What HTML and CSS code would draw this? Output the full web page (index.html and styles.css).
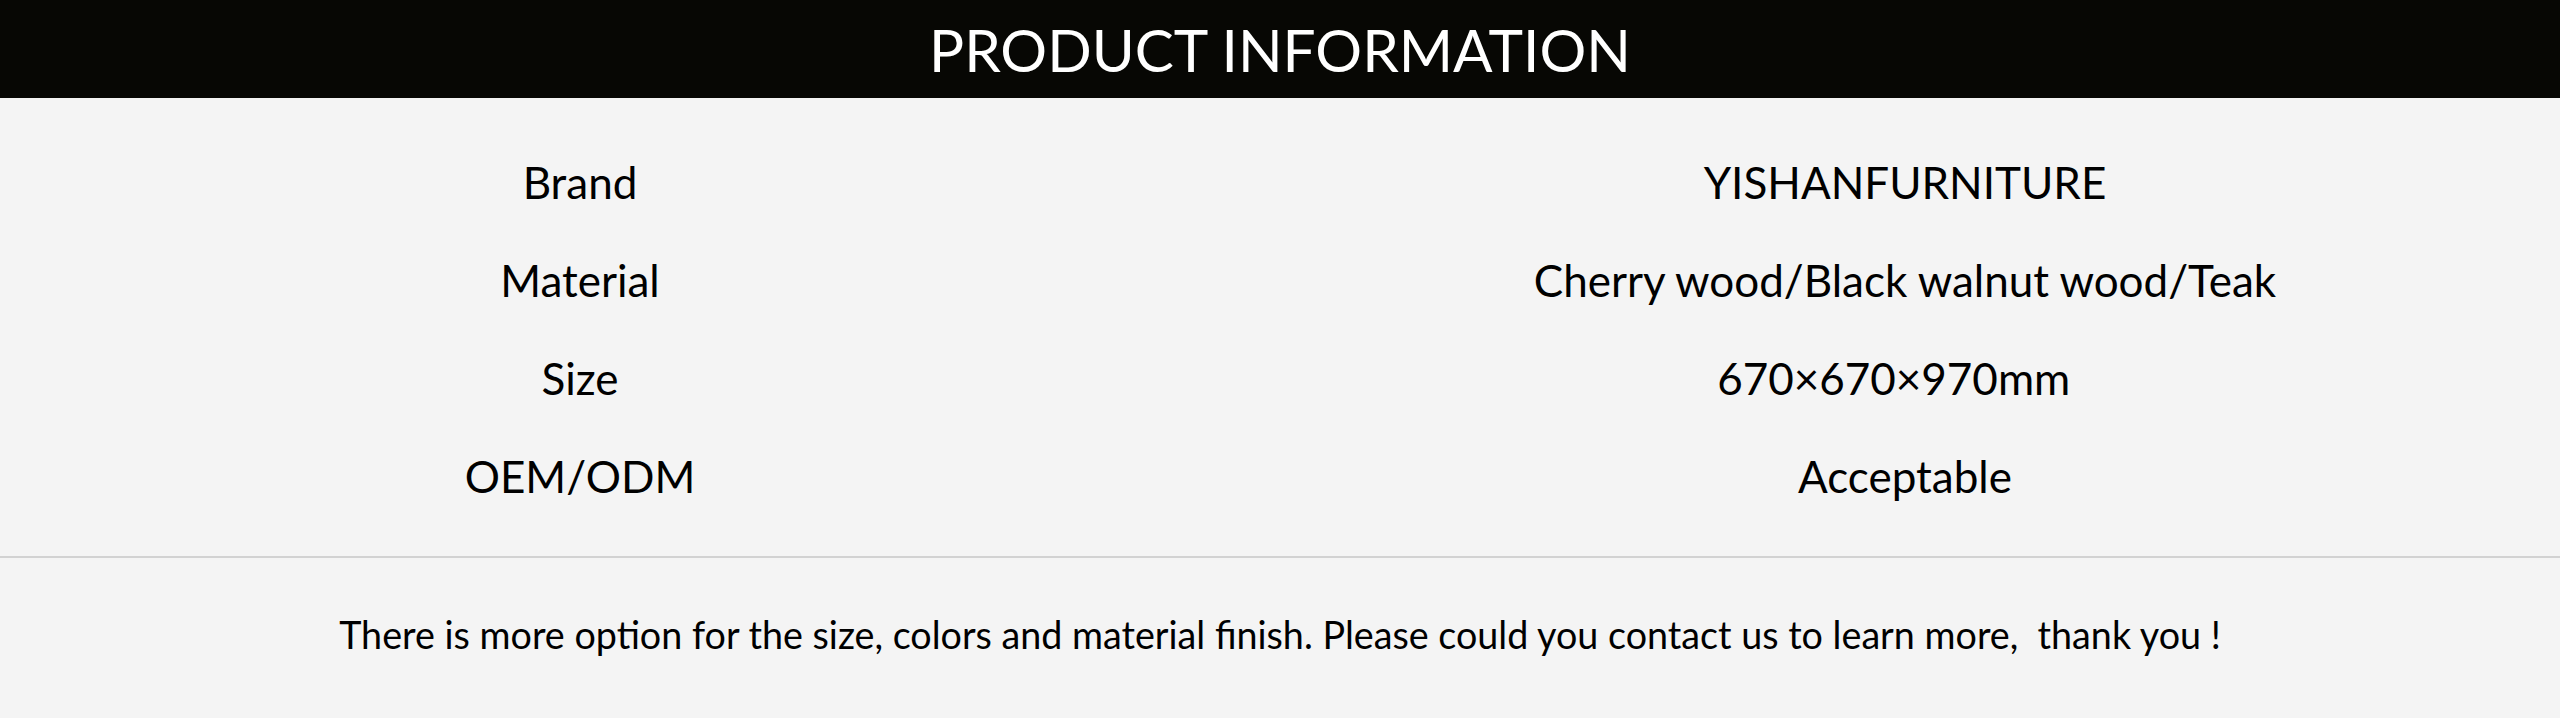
FILE: index.html
```html
<!DOCTYPE html>
<html lang="en">
<head>
<meta charset="utf-8">
<title>Product Information</title>
<link rel="stylesheet" href="styles.css">
</head>
<body>
<header class="title-bar"><h1 class="title">PRODUCT INFORMATION</h1></header>
<section class="specs">
  <div class="row"><div class="label">Brand</div><div class="value">YISHANFURNITURE</div></div>
  <div class="row"><div class="label">Material</div><div class="value">Cherry wood/Black walnut wood/Teak</div></div>
  <div class="row"><div class="label">Size</div><div class="value">670×670×970mm&nbsp;&nbsp;</div></div>
  <div class="row"><div class="label">OEM/ODM</div><div class="value">Acceptable</div></div>
</section>
<p class="note">There is more option for the size, colors and material finish. Please could you contact us to learn more,&nbsp; thank you !</p>
</body>
</html>
```
FILE: styles.css
```css
html, body {
  margin: 0;
  padding: 0;
}
body {
  background: #f4f4f4;
  font-family: Lato, "Open Sans", sans-serif;
  color: #000;
  width: 2560px;
  height: 718px;
  overflow: hidden;
}
.title-bar {
  background: #070704;
  height: 98px;
  display: flex;
  align-items: center;
  justify-content: center;
}
.title {
  margin: 0;
  font-weight: 400;
  font-size: 58.5px;
  line-height: 98px;
  color: #fff;
}
.specs {
  padding: 35px 0 31px;
  border-bottom: 2px solid #d2d2d2;
}
.row {
  display: grid;
  grid-template-columns: 1160px 1fr;
  height: 98px;
  font-size: 44px;
  line-height: 98px;
}
.label, .value {
  text-align: center;
  white-space: nowrap;
}
.value {
  padding-left: 90px;
}
.note {
  margin: 0;
  padding-top: 47px;
  font-size: 37.7px;
  line-height: 60px;
  text-align: center;
  white-space: pre;
}
```
